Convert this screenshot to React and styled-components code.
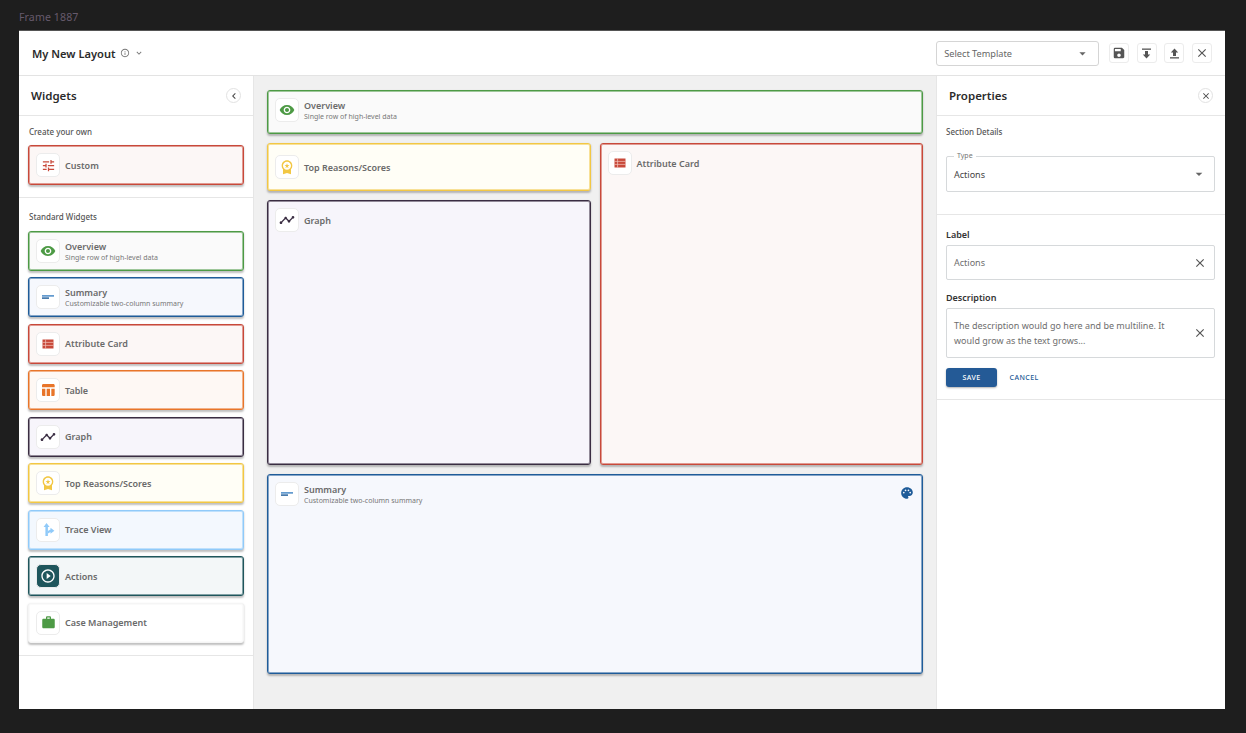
import React from "react";
import styled, { createGlobalStyle } from "styled-components";
import {
  MdRemoveRedEye, MdTune, MdTableChart, MdTimeline, MdWorkspacePremium, MdPlayCircleOutline,
  MdWork, MdSave, MdClose, MdPalette, MdInfoOutline, MdExpandMore, MdChevronLeft, MdArrowDropDown,
} from "react-icons/md";

const Global = createGlobalStyle`
  html, body { margin: 0; padding: 0; background: #1e1e1e; }
  * { box-sizing: border-box; }
  body { font-family: "Noto Sans", "Open Sans", sans-serif; -webkit-font-smoothing: antialiased; }
`;

const Page = styled.div`
  width: 1246px; height: 733px; padding: 0 21px 24px 19px;
  display: flex; flex-direction: column; overflow: hidden;
`;
const FrameLabel = styled.div`
  height: 30px; padding-top: 10px; font-size: 10.6px; line-height: 14px; color: #665a6c; letter-spacing: .1px;
`;
const Frame = styled.div`
  flex: 1; min-height: 0; background: #fff; display: flex; flex-direction: column; border-top: 1px solid #555;
`;
const TopBar = styled.header`
  height: 45px; flex: none; border-bottom: 1px solid #e3e3e3;
  display: flex; align-items: center; padding: 0 13px 0 13px;
`;
const LayoutName = styled.h1`
  margin: 0; font-size: 11.1px; font-weight: 600; color: #2b2b2b;
`;
const Muted = styled.span`
  display: inline-flex; color: #777; margin-left: ${p => p.$ml || 0}px;
`;
const TemplateSelect = styled.div`
  margin-left: auto; width: 163px; height: 25px; border: 1px solid #d5d5d5; border-radius: 3px;
  display: flex; align-items: center; justify-content: space-between; padding: 0 8px 0 7px;
  font-size: 9.2px; color: #666;
`;
const IconButton = styled.button`
  width: 20px; height: 20px; margin-left: 7.6px; padding: 0; border: 1px solid #ececec; border-radius: 3px;
  background: #fff; color: #555; display: flex; align-items: center; justify-content: center;
  &:first-of-type { margin-left: 10px; }
`;
const Body = styled.div`
  flex: 1; min-height: 0; display: flex;
`;
const LeftPanel = styled.aside`
  width: 235px; flex: none; border-right: 1px solid #e6e6e6; display: flex; flex-direction: column;
`;
const RightPanel = styled.aside`
  width: 289px; flex: none; border-left: 1px solid #e6e6e6; display: flex; flex-direction: column;
`;
const PanelHead = styled.div`
  height: 40px; flex: none; border-bottom: 1px solid #e6e6e6;
  display: flex; align-items: center; justify-content: space-between; padding: 0 12px;
`;
const PanelTitle = styled.h2`
  margin: 0; font-size: 11.5px; font-weight: 600; color: #2b2b2b;
`;
const RoundBtn = styled.button`
  width: 15px; height: 15px; border-radius: 50%; border: 1px solid #e2e2e2; background: #fff; padding: 0;
  color: #444; display: flex; align-items: center; justify-content: center;
`;
const WidgetSection = styled.section`
  padding: ${p => p.$pt}px 9px 12px 9px; border-bottom: 1px solid #e6e6e6;
  display: flex; flex-direction: column; gap: 6.5px;
`;
const SectionLabel = styled.div`
  font-size: 8px; line-height: 11px; font-weight: 500; color: #555; margin: 0 0 ${p => p.$mb}px ${p => p.$ml || 0}px;
`;
const palette = {
  green: ["#4d9a45", "#fafafa"],
  blue: ["#1f5c99", "#f6f8fd"],
  red: ["#c8493a", "#fcf7f6"],
  orange: ["#e8752a", "#fef8f4"],
  purple: ["#3a2d42", "#f7f5fb"],
  yellow: ["#f2c744", "#fffef6"],
  sky: ["#90caf9", "#f3f8fe"],
  teal: ["#1f565c", "#f3f7f8"],
  plain: ["#f5f5f5", "#fff"],
};
const Card = styled.div`
  position: relative;
  height: ${p => (p.$h ? p.$h + "px" : "auto")};
  min-height: 0;
  border: 1px solid ${p => palette[p.$c][0]};
  background: ${p => palette[p.$c][1]};
  border-radius: 3px;
  box-shadow: inset 0 0 0 1px ${p => palette[p.$c][0]}88, 0 1.5px 2px rgba(0,0,0,.25);
  padding: ${p => p.$canvas ? "7px 7px" : "0 7px"};
  display: flex; align-items: ${p => p.$canvas ? "flex-start" : "center"}; gap: 5px;
  ${p => p.$centered ? "align-items: center; padding-top: 0; padding-bottom: 0;" : ""}
`;
const Tile = styled.div`
  width: 24px; height: 24px; flex: none; border-radius: 5px; border: 1px solid #ececec;
  background: ${p => p.$dark ? "#1f565c" : "#fff"};
  color: ${p => p.$color};
  display: flex; align-items: center; justify-content: center;
`;
const CardText = styled.div`
  display: flex; flex-direction: column; min-height: 24px; justify-content: center;
  padding-top: ${p => p.$offset ? 2 : 0}px;
`;
const CardTitle = styled.div`
  font-size: 9px; line-height: 11px; font-weight: 600; color: #6a6a6a;
`;
const CardSub = styled.div`
  font-size: 7px; line-height: 11px; color: #777;
`;
const PaletteMark = styled.span`
  position: absolute; right: 8px; top: 11px; display: flex; color: #1f5c99;
`;
const Canvas = styled.main`
  flex: 1; min-width: 0; background: #f0f0f0; padding: 14px 13px 35px 13px;
  display: grid; grid-template-columns: 323.5px 323.5px; grid-template-rows: 44px 48px 265px 200px; gap: 9px;
`;
const Slot = styled.div`
  grid-column: ${p => p.$col}; grid-row: ${p => p.$row}; display: grid; min-height: 0;
`;
const PropSection = styled.section`
  padding: ${p => p.$p}; border-bottom: 1px solid #e6e6e6; display: flex; flex-direction: column;
`;
const FieldBox = styled.div`
  position: relative; width: 269px; height: ${p => p.$h}px; border: 1px solid #d6d9db; border-radius: 2px;
  display: flex; align-items: center; justify-content: space-between; padding: 0 7px 0 7px;
  font-size: 9px; line-height: 15px; color: ${p => p.$dark ? "#444" : "#6e6e6e"};
`;
const Legend = styled.span`
  position: absolute; left: 7px; top: -6px; background: #fff; padding: 0 3px; font-size: 7px; line-height: 10px; color: #777;
`;
const FieldLabel = styled.label`
  font-size: 9px; line-height: 12px; font-weight: 600; color: #333; margin-bottom: 4px; margin-top: ${p => p.$mt || 0}px;
`;
const Multiline = styled.span`
  width: 225px;
`;
const ActionRow = styled.div`
  display: flex; align-items: center; margin-top: 10px; gap: 12.5px;
`;
const SaveBtn = styled.button`
  width: 51px; height: 19px; border: 0; border-radius: 3px; padding: 0; background: #245a96; color: #fff;
  font: 500 7px "Noto Sans", sans-serif; letter-spacing: .45px; box-shadow: 0 1px 2px rgba(0,0,0,.3);
`;
const CancelBtn = styled.button`
  border: 0; background: none; padding: 0; color: #245a96; font: 500 7px "Noto Sans", sans-serif; letter-spacing: .45px;
`;

const SummaryIcon = () => (
  <svg width="14" height="14" viewBox="0 0 14 14"><rect x="1" y="5.2" width="12" height="1.4" fill="#3f83c4"/><rect x="1" y="7.4" width="7" height="1.4" fill="#1f5c99"/></svg>
);
const AttrIcon = () => (
  <svg width="14" height="14" viewBox="0 0 14 14"><path d="M1.5 2.5h11v9h-11z" fill="#c8493a"/><path d="M1.5 5.4h11M1.5 8.4h11M4.6 2.5v9" stroke="#f3c7c0" strokeWidth=".7"/></svg>
);
const TraceIcon = () => (
  <svg width="15" height="15" viewBox="0 0 15 15" fill="#90caf9"><path d="M5.5 1 8.6 5H6.9v9H4.4V5H2.6z"/><path d="M6.9 9 9.5 7.6V5.8l3.9 3-3.9 3V10L6.9 11.6z"/></svg>
);
const DownBar = () => (
  <svg width="13" height="13" viewBox="0 0 13 13" fill="currentColor"><rect x="2" y="1.5" width="9" height="1.3"/><path d="M5 4h3v3.5h2.2L6.5 11.5 2.8 7.5H5z"/></svg>
);
const UpBar = () => (
  <svg width="13" height="13" viewBox="0 0 13 13" fill="currentColor"><rect x="2" y="10.2" width="9" height="1.3"/><path d="M5 9h3V5.5h2.2L6.5 1.5 2.8 5.5H5z"/></svg>
);

const widgets = {
  custom: { c: "red", title: "Custom", color: "#c8493a", icon: <MdTune size={15} /> },
  overview: { c: "green", title: "Overview", sub: "Single row of high-level data", color: "#4d9a45", icon: <MdRemoveRedEye size={16} /> },
  summary: { c: "blue", title: "Summary", sub: "Customizable two-column summary", icon: <SummaryIcon /> },
  attr: { c: "red", title: "Attribute Card", icon: <AttrIcon /> },
  table: { c: "orange", title: "Table", color: "#e8752a", icon: <MdTableChart size={16} /> },
  graph: { c: "purple", title: "Graph", color: "#3a2d42", icon: <MdTimeline size={16} /> },
  top: { c: "yellow", title: "Top Reasons/Scores", color: "#f2c744", icon: <MdWorkspacePremium size={16} /> },
  trace: { c: "sky", title: "Trace View", icon: <TraceIcon /> },
  actions: { c: "teal", title: "Actions", color: "#fff", dark: true, icon: <MdPlayCircleOutline size={16} /> },
  cases: { c: "plain", title: "Case Management", color: "#4d9a45", icon: <MdWork size={15} /> },
};
const standard = ["overview", "summary", "attr", "table", "graph", "top", "trace", "actions", "cases"];

const Widget = ({ id, canvas, centered, h, children }) => {
  const w = widgets[id];
  return (
    <Card $c={w.c} $canvas={canvas} $centered={centered} $h={h}>
      <Tile $color={w.color} $dark={w.dark}>{w.icon}</Tile>
      <CardText $offset={!!w.sub}>
        <CardTitle>{w.title}</CardTitle>
        {w.sub && <CardSub>{w.sub}</CardSub>}
      </CardText>
      {children}
    </Card>
  );
};

export default function App() {
  return (
    <Page>
      <Global />
      <FrameLabel>Frame 1887</FrameLabel>
      <Frame>
        <TopBar>
          <LayoutName>My New Layout</LayoutName>
          <Muted $ml={5}><MdInfoOutline size={10} /></Muted>
          <Muted $ml={4}><MdExpandMore size={10} /></Muted>
          <TemplateSelect>Select Template <MdArrowDropDown size={15} /></TemplateSelect>
          <IconButton><MdSave size={14} /></IconButton>
          <IconButton><DownBar /></IconButton>
          <IconButton><UpBar /></IconButton>
          <IconButton><MdClose size={14} /></IconButton>
        </TopBar>
        <Body>
          <LeftPanel>
            <PanelHead>
              <PanelTitle>Widgets</PanelTitle>
              <RoundBtn><MdChevronLeft size={12} /></RoundBtn>
            </PanelHead>
            <WidgetSection $pt={10}>
              <SectionLabel $mb={1.5} $ml={1}>Create your own</SectionLabel>
              <Widget id="custom" h={40} />
            </WidgetSection>
            <WidgetSection $pt={13}>
              <SectionLabel $mb={2.3} $ml={1}>Standard Widgets</SectionLabel>
              {standard.map(id => <Widget key={id} id={id} h={40} />)}
            </WidgetSection>
          </LeftPanel>
          <Canvas>
            <Slot $col="1 / 3" $row="1"><Widget id="overview" canvas /></Slot>
            <Slot $col="1" $row="2"><Widget id="top" canvas centered /></Slot>
            <Slot $col="1" $row="3"><Widget id="graph" canvas /></Slot>
            <Slot $col="2" $row="2 / 4"><Widget id="attr" canvas /></Slot>
            <Slot $col="1 / 3" $row="4">
              <Widget id="summary" canvas><PaletteMark><MdPalette size={14} /></PaletteMark></Widget>
            </Slot>
          </Canvas>
          <RightPanel>
            <PanelHead>
              <PanelTitle>Properties</PanelTitle>
              <RoundBtn><MdClose size={10} /></RoundBtn>
            </PanelHead>
            <PropSection $p="10px 9px 22px 9px">
              <SectionLabel $mb={19}>Section Details</SectionLabel>
              <FieldBox $h={36} $dark>
                <Legend>Type</Legend>
                Actions
                <MdArrowDropDown size={16} color="#666" />
              </FieldBox>
            </PropSection>
            <PropSection $p="14px 9px 12px 9px">
              <FieldLabel>Label</FieldLabel>
              <FieldBox $h={35}>Actions <MdClose size={14} color="#555" /></FieldBox>
              <FieldLabel $mt={12}>Description</FieldLabel>
              <FieldBox $h={50}>
                <Multiline>The description would go here and be multiline. It would grow as the text grows...</Multiline>
                <MdClose size={14} color="#555" />
              </FieldBox>
              <ActionRow>
                <SaveBtn>SAVE</SaveBtn>
                <CancelBtn>CANCEL</CancelBtn>
              </ActionRow>
            </PropSection>
          </RightPanel>
        </Body>
      </Frame>
    </Page>
  );
}
